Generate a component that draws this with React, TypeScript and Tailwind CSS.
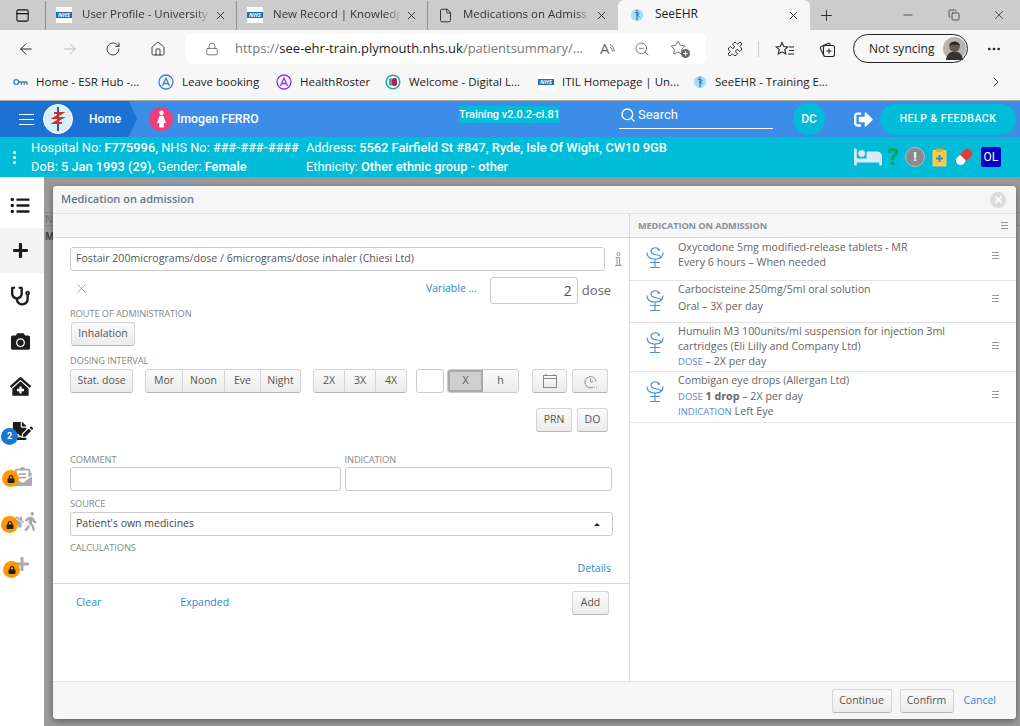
import { ReactNode } from 'react';
import { ArrowLeft, ArrowRight, RotateCw, Home, Lock, ZoomOut, Puzzle, Copy, X, Minus, Plus, File, PanelTop, ChevronRight, MoreHorizontal, Search, Star } from 'lucide-react';
import { FaBed, FaCamera, FaClinicMedical, FaEnvelopeOpenText, FaFileSignature, FaHome, FaListUl, FaLock, FaPlus, FaSignOutAlt, FaStethoscope, FaWalking } from 'react-icons/fa';

const uiFont = "font-['Open_Sans','Noto_Sans',sans-serif]";

function NhsLogo() {
  return (
    <span className="flex h-4 w-4 shrink-0 items-center bg-white">
      <span className="flex h-[6px] w-4 items-center justify-center bg-[#1d6fb8] text-[6px] font-bold italic leading-none text-white">NHS</span>
    </span>
  );
}

function EhrLogo() {
  return (
    <svg viewBox="0 0 16 16" className="h-[14px] w-[14px] shrink-0">
      <circle cx="8" cy="8" r="7" fill="#a9dcf2" />
      <path d="M8 2v12" stroke="#1c6fb5" strokeWidth="1.2" />
      <path d="M5.500 5.500c2-1 4 0 5 .5s-3 2-3 2 4 1 2.500 2.500" stroke="#1c6fb5" strokeWidth="1" fill="none" />
    </svg>
  );
}

function Tab({ icon, title }: { icon: ReactNode; title: string }) {
  return (
    <div className="flex h-[29px] w-[191px] shrink-0 items-center border-r border-[#8f8f8f] pl-[10px] pr-[6px]">
      {icon}
      <span className="ml-[10px] w-[128px] whitespace-nowrap pb-[2px] text-[11.5px] text-[#333] [mask-image:linear-gradient(to_right,black_88%,transparent)]">{title}</span>
      <X className="ml-[4px] h-[13px] w-[13px] text-[#222]" strokeWidth={1.6} />
    </div>
  );
}

function Bookmark({ icon, label, w }: { icon: ReactNode; label: string; w: string }) {
  return (
    <div className={`flex shrink-0 items-center gap-[8px] text-[11.5px] text-[#222] ${w}`}>
      {icon}
      <span className="whitespace-nowrap">{label}</span>
    </div>
  );
}

function RingIcon({ color }: { color: string }) {
  return (
    <svg viewBox="0 0 16 16" className="h-[16px] w-[16px] shrink-0" fill="none" stroke={color} strokeWidth="1.3">
      <circle cx="8" cy="8" r="7" />
      <path d="M4.500 12 8 4l3.500 8M5.500 9.500h5" />
    </svg>
  );
}

function BrowserChrome() {
  return (
    <div className={`${uiFont} shrink-0`}>
      <div className="flex h-[30px] items-center bg-[#cccccc]">
        <div className="flex h-[29px] w-[46px] shrink-0 items-center justify-center border-r border-[#8f8f8f]">
          <PanelTop className="h-[15px] w-[15px] text-[#111]" strokeWidth={1.7} />
        </div>
        <Tab icon={<NhsLogo />} title="User Profile - University" />
        <Tab icon={<NhsLogo />} title="New Record | Knowledg" />
        <div className="flex h-[29px] w-[190px] shrink-0 items-center pl-[10px] pr-[6px]">
          <File className="h-[15px] w-[15px] text-[#222]" strokeWidth={1.4} />
          <span className="ml-[10px] w-[128px] whitespace-nowrap pb-[2px] text-[11.5px] text-[#333] [mask-image:linear-gradient(to_right,black_88%,transparent)]">Medications on Admiss</span>
          <X className="ml-[4px] h-[13px] w-[13px] text-[#222]" strokeWidth={1.6} />
        </div>
        <div className="flex h-[30px] w-[192px] shrink-0 items-center rounded-t-[6px] bg-[#f7f7f7] pl-[12px] pr-[10px]">
          <EhrLogo />
          <span className="ml-[11px] flex-1 pb-[2px] text-[12px] text-[#222]">SeeEHR</span>
          <X className="h-[13px] w-[13px] text-[#222]" strokeWidth={1.6} />
        </div>
        <Plus className="ml-[8px] h-[17px] w-[17px] text-[#222]" strokeWidth={1.3} />
        <div className="ml-auto flex items-center">
          <Minus className="h-[14px] w-[14px] text-[#222]" strokeWidth={1.2} />
          <Copy className="ml-[33px] h-[12px] w-[12px] text-[#222]" strokeWidth={1.4} />
          <X className="ml-[32px] mr-[14px] h-[14px] w-[14px] text-[#222]" strokeWidth={1.2} />
        </div>
      </div>
      <div className="flex h-[37px] items-center bg-[#f7f7f7]">
        <ArrowLeft className="ml-[17px] h-[18px] w-[18px] text-[#222]" strokeWidth={1.3} />
        <ArrowRight className="ml-[26px] h-[18px] w-[18px] text-[#bdbdbd]" strokeWidth={1.3} />
        <RotateCw className="ml-[26px] h-[16px] w-[16px] text-[#222]" strokeWidth={1.3} />
        <Home className="ml-[29px] h-[16px] w-[16px] text-[#222]" strokeWidth={1.3} />
        <div className="ml-[20px] flex h-[30px] w-[520px] shrink-0 items-center rounded-[5px] bg-white pl-[19px] text-[13px]">
          <Lock className="h-[14px] w-[14px] text-[#555]" strokeWidth={1.3} />
          <span className="ml-[16px] whitespace-nowrap text-[#777]">https://<span className="text-[#222]">see-ehr-train.plymouth.nhs.uk</span>/patientsummary/...</span>
          <span className="ml-[17px] flex items-center text-[15px] text-[#666]">
            A
            <svg viewBox="0 0 8 14" className="h-[14px] w-[7px]" fill="none" stroke="#666" strokeWidth="1"><path d="M1 2c3 1 5 4 5 8M1 5c2 .8 3 2.500 3 5" /></svg>
          </span>
          <ZoomOut className="ml-[18px] h-[16px] w-[16px] text-[#666]" strokeWidth={1.3} />
          <span className="relative ml-[20px] flex h-[18px] w-[20px]">
            <Star className="h-[16px] w-[16px] text-[#555]" strokeWidth={1.3} />
            <span className="absolute bottom-0 right-0 flex h-[9px] w-[9px] items-center justify-center rounded-full bg-[#666]"><Plus className="h-[7px] w-[7px] text-white" strokeWidth={3} /></span>
          </span>
        </div>
        <Puzzle className="ml-[21px] h-[16px] w-[16px] text-[#222]" strokeWidth={1.4} />
        <span className="ml-[15px] h-[16px] w-px bg-[#ccc]" />
        <svg viewBox="0 0 20 16" className="ml-[16px] h-[16px] w-[20px] text-[#222]" fill="none" stroke="currentColor" strokeWidth="1.100">
          <path d="M7 1.500 8.800 5.500l4 .4-3 2.800.9 4.200L7 10.800 3.300 12.900l.9-4.200-3-2.800 4-.4z" />
          <path d="M14 6h5M14 9.500h5M13 13h6" />
        </svg>
        <svg viewBox="0 0 16 16" className="ml-[24px] h-[16px] w-[16px] text-[#222]" fill="none" stroke="currentColor" strokeWidth="1.100">
          <rect x="4.500" y="4.500" width="11" height="11" rx="2" />
          <path d="M10 7.500v5M7.500 10h5M4 13 1.500 7.500a1.500 1.500 0 0 1 .8-2L9 2.500a1.500 1.500 0 0 1 2 .8l.4 1" />
        </svg>
        <div className="ml-[18px] flex h-[29px] w-[115px] shrink-0 items-center rounded-full border border-[#222] pl-[15px] text-[12px] text-[#222]">
          Not syncing
          <svg viewBox="0 0 24 24" className="ml-[9px] h-[23px] w-[23px] shrink-0">
            <circle cx="12" cy="12" r="12" fill="#b5b5b5" />
            <path d="M3 24c1-7 5-9 9-9s8 2 9 9z" fill="#333" />
            <circle cx="12" cy="10" r="5.500" fill="#6b5a4e" />
            <path d="M6.500 9c0-5 11-5 11 0-3-1.500-8-1.500-11 0z" fill="#222" />
          </svg>
        </div>
        <MoreHorizontal className="ml-[18px] h-[16px] w-[16px] text-[#222]" strokeWidth={2} />
      </div>
      <div className="flex h-[33px] items-center bg-[#f7f7f7] pb-[3px] pl-[13px]">
        <Bookmark
          icon={
            <svg viewBox="0 0 16 8" className="h-[8px] w-[15px] shrink-0" fill="none" stroke="#3f7fb8" strokeWidth="1.500"><circle cx="3.500" cy="4" r="2.500" /><path d="M6 4h9M9 4v3M12 4v3M15 4v3" /></svg>
          }
          label="Home - ESR Hub -..."
          w="w-[145px]"
        />
        <Bookmark icon={<RingIcon color="#3a7fd0" />} label="Leave booking" w="w-[118px]" />
        <Bookmark icon={<RingIcon color="#9333ea" />} label="HealthRoster" w="w-[109px]" />
        <Bookmark
          icon={
            <svg viewBox="0 0 16 16" className="h-[16px] w-[16px] shrink-0"><circle cx="8" cy="8" r="6.800" fill="#fff" stroke="#1aa6b7" strokeWidth="1.500" /><rect x="4" y="4.500" width="4" height="7" rx="1" fill="#2eb872" /><rect x="7" y="4" width="5" height="8" rx="2" fill="#c2185b" /></svg>
          }
          label="Welcome - Digital L..."
          w="w-[153px]"
        />
        <Bookmark icon={<NhsLogo />} label="ITIL Homepage | Un..." w="w-[155px]" />
        <Bookmark icon={<EhrLogo />} label="SeeEHR - Training E..." w="w-[295px]" />
        <ChevronRight className="h-[16px] w-[16px] text-[#333]" strokeWidth={1.4} />
      </div>
    </div>
  );
}

function AppHeader() {
  return (
    <div className="shrink-0 font-['Roboto',sans-serif] text-white">
      <div className="flex h-[37px] items-center border-t border-[#a8a8a8] bg-[#3b8de8]">
        <div className="flex h-full w-[137px] shrink-0 items-center bg-[#1c72d2] [clip-path:polygon(0_0,94%_0,100%_50%,94%_100%,0_100%)]">
          <div className="ml-[19px] flex w-[15px] flex-col gap-[4px]">
            <span className="h-px bg-white" /><span className="h-px bg-white" /><span className="h-px bg-white" />
          </div>
          <svg viewBox="0 0 30 30" className="ml-[9px] h-[30px] w-[30px] shrink-0">
            <circle cx="15" cy="15" r="14.500" fill="#d8eef8" stroke="#fff" />
            <path d="M15 3v24" stroke="#27618f" strokeWidth="2" />
            <path d="M11 9h8l-8 5h8l-8 5h8" stroke="#d32f2f" strokeWidth="2" fill="none" />
          </svg>
          <span className="ml-[16px] text-[12px] font-medium">Home</span>
        </div>
        <div className="ml-[12px] flex h-[24px] w-[24px] shrink-0 items-center justify-center rounded-full bg-[#ec407a]">
          <svg viewBox="0 0 12 20" className="h-[18px] w-[11px]" fill="#fff"><circle cx="6" cy="3" r="2.500" /><path d="M4 6.500h4l3 8H8.500v5h-5v-5H1z" /></svg>
        </div>
        <span className="ml-[4px] w-[80px] shrink-0 whitespace-nowrap text-[12.2px] font-medium">Imogen FERRO</span>
        <div className="ml-[202px] mt-[5px] w-[100px] shrink-0 self-start whitespace-nowrap bg-[#00bcd8] text-[11px] font-medium leading-[17px]">Training v2.0.2-ci.81</div>
        <div className="ml-[60px] flex h-[28px] w-[154px] shrink-0 items-center gap-[2px] self-start border-b border-white pl-[1px]">
          <Search className="h-[16px] w-[16px]" strokeWidth={2} />
          <span className="text-[13px]">Search</span>
        </div>
        <div className="ml-[20px] flex h-[32px] w-[32px] shrink-0 items-center justify-center rounded-full bg-[#00bcd8] text-[12px] font-medium">DC</div>
        <FaSignOutAlt className="ml-[29px] h-[19px] w-[19px] shrink-0" />
        <div className="ml-[7px] flex h-[31px] w-[136px] shrink-0 items-center justify-center rounded-full bg-[#00bcd8] text-[10.5px] font-medium tracking-[0.5px]">HELP &amp; FEEDBACK</div>
      </div>
      <div className="flex h-[40px] items-center bg-[#00bcd8] text-[12.8px]">
        <div className="flex w-[29px] shrink-0 flex-col items-center gap-[2px]">
          <span className="h-[3px] w-[3px] rounded-full bg-white" /><span className="h-[3px] w-[3px] rounded-full bg-white" /><span className="h-[3px] w-[3px] rounded-full bg-white" />
        </div>
        <div className="ml-[2px] flex w-[275px] shrink-0 flex-col leading-[19px]">
          <span className="whitespace-nowrap">Hospital No: <b className="font-medium">F775996,</b> NHS No: <b className="font-medium">###-###-####</b></span>
          <span className="whitespace-nowrap">DoB: <b className="font-medium">5 Jan 1993 (29),</b> Gender: <b className="font-medium">Female</b></span>
        </div>
        <div className="flex w-[548px] shrink-0 flex-col leading-[19px]">
          <span className="whitespace-nowrap">Address: <b className="font-medium">5562 Fairfield St #847, Ryde, Isle Of Wight, CW10 9GB</b></span>
          <span className="whitespace-nowrap">Ethnicity: <b className="font-medium">Other ethnic group - other</b></span>
        </div>
        <FaBed className="h-[24px] w-[28px] text-[#dbe9f4]" />
        <span className="ml-[5px] text-[24px] font-bold leading-none text-[#0aa65a]">?</span>
        <span className="ml-[6px] flex h-[20px] w-[20px] items-center justify-center rounded-full border border-[#bbb] bg-[#8a8a8a] text-[13px] font-bold">!</span>
        <svg viewBox="0 0 15 19" className="ml-[7px] h-[19px] w-[15px]">
          <rect x="0.500" y="2" width="14" height="16.500" rx="1" fill="#ffc94d" />
          <rect x="4.500" y="0.500" width="6" height="3.500" fill="#e8a92c" />
          <path d="M7.500 7v7M4 10.500h7" stroke="#2f8fc0" strokeWidth="2" />
        </svg>
        <svg viewBox="0 0 20 20" className="ml-[7px] h-[20px] w-[20px]">
          <g transform="rotate(-45 10 10)">
            <rect x="0.500" y="5.500" width="10" height="9" rx="4.500" fill="#fff" />
            <rect x="9" y="5.500" width="10.500" height="9" rx="4.500" fill="#e53935" />
            <rect x="9" y="5.500" width="3" height="9" fill="#e53935" />
          </g>
        </svg>
        <span className="ml-[7px] flex h-[20px] w-[20px] items-center justify-center rounded-[2px] bg-[#0000c8] text-[12px]">OL</span>
      </div>
    </div>
  );
}

function LockBadge({ className }: { className: string }) {
  return (
    <span className={`absolute flex h-[17px] w-[17px] items-center justify-center rounded-full bg-[#ff9800] ${className}`}>
      <FaLock className="h-[8px] w-[8px] text-[#222]" />
    </span>
  );
}

function Sidebar() {
  return (
    <div className="flex w-[44px] shrink-0 flex-col items-center bg-white text-[#1c1c1c]">
      <div className="flex h-[38px] w-full items-center justify-center pr-[4px] pt-[18px]"><FaListUl className="h-[19px] w-[20px]" /></div>
      <div className="mt-[13px] flex h-[45px] w-full items-center justify-center bg-[#f4f4f4] pr-[4px]"><FaPlus className="h-[17px] w-[17px]" /></div>
      <div className="flex h-[46px] w-full items-center justify-center pr-[4px]"><FaStethoscope className="h-[20px] w-[19px]" /></div>
      <div className="flex h-[45px] w-full items-center justify-center pr-[4px]"><FaCamera className="h-[19px] w-[19px]" /></div>
      <div className="flex h-[45px] w-full items-center justify-center pr-[4px]"><FaClinicMedical className="h-[19px] w-[21px]" /></div>
      <div className="relative flex h-[44px] w-full items-center justify-center pl-[1px]">
        <FaFileSignature className="h-[18px] w-[22px]" />
        <span className="absolute left-[1px] top-[19px] flex h-[17px] w-[17px] items-center justify-center rounded-full bg-[#1976d2] text-[9px] font-bold text-white font-['Roboto',sans-serif]">2</span>
      </div>
      <div className="relative flex h-[46px] w-full items-center justify-center text-[#aaa]">
        <FaEnvelopeOpenText className="h-[19px] w-[19px]" />
        <LockBadge className="left-[2px] top-[17px]" />
      </div>
      <div className="relative flex h-[45px] w-full items-center justify-center text-[#aaa]">
        <FaHome className="ml-[2px] h-[14px] w-[14px]" />
        <FaWalking className="h-[19px] w-[13px]" />
        <LockBadge className="left-[1px] top-[17px]" />
      </div>
      <div className="relative flex h-[40px] w-full items-center justify-center pr-[1px] text-[#aaa]">
        <FaPlus className="h-[16px] w-[16px]" />
        <LockBadge className="left-[3px] top-[17px]" />
      </div>
    </div>
  );
}

function GrayButton({ children, className = '' }: { children: ReactNode; className?: string }) {
  return (
    <div className={`flex h-[24px] items-center justify-center rounded-[3px] border border-[#d4d4d4] border-b-[#b5b5b5] bg-gradient-to-b from-[#fafafa] to-[#ececec] text-[10.5px] text-[#555] ${className}`}>
      {children}
    </div>
  );
}

function Group({ items, widths }: { items: string[]; widths: string[] }) {
  return (
    <div className="flex h-[24px] overflow-hidden rounded-[3px] border border-[#d4d4d4] border-b-[#b5b5b5] bg-gradient-to-b from-[#fafafa] to-[#ececec] text-[10.5px] text-[#555]">
      {items.map((item, i) => (
        <div key={item} className={`flex items-center justify-center ${i > 0 ? 'border-l border-[#d4d4d4]' : ''} ${widths[i]}`}>{item}</div>
      ))}
    </div>
  );
}

function FieldLabel({ children }: { children: ReactNode }) {
  return <div className="text-[9.3px] uppercase leading-[12px] tracking-[-0.1px] text-[#888]">{children}</div>;
}

function Snake() {
  return (
    <svg viewBox="0 0 18 23" className="h-[23px] w-[18px] shrink-0" fill="none" stroke="#4a90d9" strokeWidth="1.150">
      <path d="M12.500 3C10 .8 5 1.800 5 5c0 3 3.500 3.800 6.500 4 3 .3 4 2 3.200 3.300" />
      <path d="M1 6.500C1 11.500 4.500 13 9 13s8-1.500 8-6.500" />
      <path d="M9 13v9M4 16.500h10M4 21.500h10" />
      <circle cx="12.800" cy="3.800" r=".6" />
    </svg>
  );
}

function DragLines({ className }: { className: string }) {
  return (
    <div className={`flex flex-col gap-[2px] ${className}`}>
      <span className="h-px bg-[#999]" /><span className="h-px bg-[#999]" /><span className="h-px bg-[#999]" />
    </div>
  );
}

function Tag({ children }: { children: ReactNode }) {
  return <span className="text-[9.5px] uppercase text-[#5c85d6]">{children}</span>;
}

function MedItem({ lines, h, text, drag }: { lines: ReactNode[]; h: string; text: string; drag: string }) {
  return (
    <div className={`flex items-start border-b border-[#e2e2e2] ${h}`}>
      <div className="ml-[16px] mt-[8px] w-[32px] shrink-0"><Snake /></div>
      <div className={`flex-1 text-[10.7px] text-[#666] ${text}`}>
        {lines.map((l, i) => <div key={i}>{l}</div>)}
      </div>
      <DragLines className={`mr-[17px] w-[7px] ${drag}`} />
    </div>
  );
}

function MedicationModal() {
  return (
    <div className={`${uiFont} absolute left-[9px] top-[9px] flex h-[533px] w-[963px] flex-col rounded-[4px] bg-white shadow-[0_2px_6px_rgba(0,0,0,0.4)]`}>
      <div className="flex h-[28px] shrink-0 items-center rounded-t-[4px] border-b border-[#e4e4e4] bg-[#f6f6f6] pl-[8px] pr-[10px]">
        <span className="flex-1 text-[11px] font-semibold text-[#64788c]">Medication on admission</span>
        <span className="flex h-[16px] w-[16px] items-center justify-center rounded-full bg-[#dcdcdc]"><X className="h-[11px] w-[11px] text-white" strokeWidth={3.5} /></span>
      </div>
      <div className="flex min-h-0 flex-1">
        <div className="flex w-[577px] shrink-0 flex-col border-r border-[#d8d8d8]">
          <div className="h-[24px] shrink-0 border-b border-[#dcdcdc] bg-[#f6f6f6]" />
          <div className="flex-[0_0_345px] px-[17px] pt-[9px]">
            <div className="flex items-center">
              <div className="flex h-[24px] w-[535px] shrink-0 items-center rounded-[3px] border border-[#ccc] pl-[5px] text-[10.6px] text-[#555]">
                Fostair 200micrograms/dose / 6micrograms/dose inhaler (Chiesi Ltd)
              </div>
              <svg viewBox="0 0 8 15" className="ml-[9px] h-[15px] w-[8px] shrink-0" fill="none" stroke="#999" strokeWidth="1">
                <circle cx="4.500" cy="2" r="1.500" />
                <path d="M1.500 5.500h4v7.500h2M1 13.500h6.500M3 6v7" />
              </svg>
            </div>
            <div className="mt-[6px] flex items-start">
              <X className="ml-[4px] mt-[4px] h-[15px] w-[15px] shrink-0 text-[#888]" strokeWidth={1.2} />
              <span className="ml-[337px] mt-[4px] whitespace-nowrap text-[10.5px] text-[#2a88d0]">Variable ...</span>
              <div className="ml-[13px] flex h-[27px] w-[88px] shrink-0 items-center justify-end rounded-[3px] border border-[#ccc] pr-[5px] text-[14px] text-[#555]">2</div>
              <span className="ml-[4px] mt-[4px] text-[13px] text-[#666]">dose</span>
            </div>
            <div className="mt-[4px]"><FieldLabel>Route of administration</FieldLabel></div>
            <GrayButton className="ml-[1px] mt-[2px] w-[64px]">Inhalation</GrayButton>
            <div className="mt-[9px]"><FieldLabel>Dosing interval</FieldLabel></div>
            <div className="mt-[2px] flex">
              <GrayButton className="w-[63px]">Stat. dose</GrayButton>
              <div className="ml-[12px]"><Group items={['Mor', 'Noon', 'Eve', 'Night']} widths={['w-[36px]', 'w-[42px]', 'w-[36px]', 'w-[40px]']} /></div>
              <div className="ml-[12px]"><Group items={['2X', '3X', '4X']} widths={['w-[30px]', 'w-[31px]', 'w-[31px]']} /></div>
              <div className="ml-[9px] h-[24px] w-[28px] rounded-[3px] border border-[#ccc]" />
              <div className="ml-[3px] flex h-[24px] overflow-hidden rounded-[3px] border border-[#ccc] text-[10.5px] text-[#555]">
                <div className="flex w-[35px] items-center justify-center border-2 border-[#aaa] bg-[#cfcfcf]">X</div>
                <div className="flex w-[35px] items-center justify-center bg-gradient-to-b from-[#fafafa] to-[#ececec]">h</div>
              </div>
              <GrayButton className="ml-[13px] w-[35px]">
                <svg viewBox="0 0 16 16" className="h-[16px] w-[16px]" fill="none" stroke="#888"><rect x="1.500" y="2.500" width="13" height="12" /><path d="M1.500 5.500h13M4 1v2M12 1v2" /></svg>
              </GrayButton>
              <GrayButton className="ml-[5px] w-[36px]">
                <svg viewBox="0 0 16 16" className="h-[15px] w-[15px]" fill="none" stroke="#888"><path d="M11 14A6 6 0 1 1 14 8M8 4.500V8.500H11" /><path d="M12 14h.8M14 14h.8" /></svg>
              </GrayButton>
            </div>
            <div className="mt-[15px] flex w-[538px] justify-end gap-[5px]">
              <GrayButton className="w-[36px]">PRN</GrayButton>
              <GrayButton className="w-[31px]">DO</GrayButton>
            </div>
            <div className="mt-[22px] flex gap-[4px]">
              <div className="w-[271px]">
                <FieldLabel>Comment</FieldLabel>
                <div className="mt-[1px] h-[24px] rounded-[3px] border border-[#ccc]" />
              </div>
              <div className="w-[268px]">
                <FieldLabel>Indication</FieldLabel>
                <div className="mt-[1px] h-[24px] rounded-[3px] border border-[#ccc]" />
              </div>
            </div>
            <div className="mt-[7px]"><FieldLabel>Source</FieldLabel></div>
            <div className="mt-[2px] flex h-[24px] w-[543px] items-center rounded-[3px] border border-[#ccc] pl-[5px] pr-[12px] text-[10.5px] text-[#444]">
              <span className="flex-1">Patient's own medicines</span>
              <span className="h-0 w-0 border-x-[3px] border-b-[3px] border-x-transparent border-b-[#222]" />
            </div>
            <div className="mt-[6px]"><FieldLabel>Calculations</FieldLabel></div>
            <div className="mt-[7px] w-[541px] text-right text-[10.5px] text-[#2a88d0]">Details</div>
          </div>
          <div className="flex h-[38px] shrink-0 items-center border-t border-[#d8d8d8] pl-[23px] pr-[20px] text-[10.5px] text-[#2a88d0]">
            <span>Clear</span>
            <span className="ml-[79px] flex-1">Expanded</span>
            <GrayButton className="w-[37px] text-[#444]">Add</GrayButton>
          </div>
        </div>
        <div className="flex min-w-0 flex-1 flex-col">
          <div className="flex h-[24px] shrink-0 items-center border-b border-[#d8d8d8] bg-[#f6f6f6] px-[8px]">
            <span className="flex-1 text-[9.2px] font-bold uppercase tracking-[-0.1px] text-[#8a8f99]">Medication on admission</span>
            <DragLines className="w-[7px]" />
          </div>
          <MedItem h="h-[43px]" text="pt-[2px] leading-[15px]" drag="mt-[14px]" lines={['Oxycodone 5mg modified-release tablets - MR', 'Every 6 hours – When needed']} />
          <MedItem h="h-[42px]" text="leading-[17px]" drag="mt-[14px]" lines={['Carbocisteine 250mg/5ml oral solution', 'Oral – 3X per day']} />
          <MedItem h="h-[49px]" text="pt-[1px] leading-[15px]" drag="mt-[19px]" lines={['Humulin M3 100units/ml suspension for injection 3ml', 'cartridges (Eli Lilly and Company Ltd)', <><Tag>Dose</Tag> – 2X per day</>]} />
          <MedItem h="h-[51px]" text="pt-[1px] leading-[15.5px]" drag="mt-[19px]" lines={['Combigan eye drops (Allergan Ltd)', <><Tag>Dose</Tag> <b className="font-bold">1 drop</b> – 2X per day</>, <><Tag>Indication</Tag> Left Eye</>]} />
        </div>
      </div>
      <div className="flex h-[38px] shrink-0 items-center justify-end rounded-b-[4px] border-t border-[#e4e4e4] bg-[#f6f6f6] pr-[20px]">
        <GrayButton className="w-[60px] text-[#444]">Continue</GrayButton>
        <GrayButton className="ml-[8px] w-[54px] text-[#444]">Confirm</GrayButton>
        <span className="ml-[10px] text-[10.5px] text-[#2a88d0]">Cancel</span>
      </div>
    </div>
  );
}

// dimmed page behind the dialog, only its edges show
function DimmedPage() {
  return (
    <div className={`${uiFont} text-[10px] leading-none text-[#6f6f6f]`}>
      <div className="ml-[113px] h-[8px] w-[36px] bg-[#8d9dab]" />
      <div className="mt-[27px] flex h-[14px] items-center border-y border-[#8a8a8a] pl-[1px]">N</div>
      <div className="mt-[5px] pl-[1px] font-bold text-[#3a4350]">M</div>
    </div>
  );
}

export default function App() {
  return (
    <div className="flex h-[726px] w-[1020px] flex-col overflow-hidden bg-white">
      <BrowserChrome />
      <AppHeader />
      <div className="flex min-h-0 flex-1">
        <Sidebar />
        <div className="relative flex-1 bg-[#9a9a9a]">
          <DimmedPage />
          <MedicationModal />
        </div>
      </div>
    </div>
  );
}
